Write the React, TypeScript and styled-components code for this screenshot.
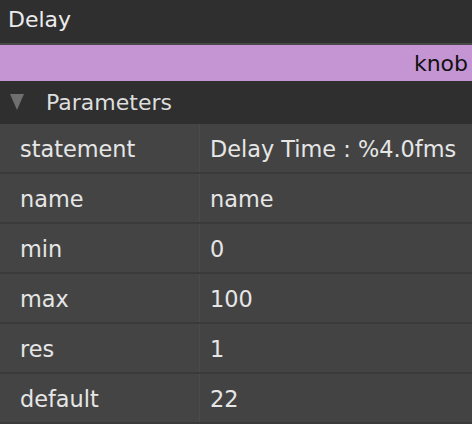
import styled, { createGlobalStyle } from "styled-components";

const GlobalStyle = createGlobalStyle`
  html, body {
    margin: 0;
    padding: 0;
    background: #2f2f2f;
  }
  body {
    font-family: "DejaVu Sans", "Liberation Sans", sans-serif;
  }
`;

const Panel = styled.div`
  width: 472px;
  height: 424px;
  overflow: hidden;
  background: #2f2f2f;
  color: #e4e4e4;
  font-size: 22px;
`;

const TitleBar = styled.div`
  height: 45px;
  display: flex;
  align-items: center;
  padding: 0 0 4px 8px;
  box-sizing: border-box;
  border-bottom: 2px solid #4a4a4a;
  color: #ececec;
`;

const TypeBar = styled.div`
  height: 36px;
  display: flex;
  align-items: center;
  justify-content: flex-end;
  padding: 0 4px 0 0;
  background: #c594d3;
  color: #111;
`;

const SectionHeader = styled.div`
  height: 43px;
  display: flex;
  align-items: center;
  gap: 22px;
  padding: 0 0 1px 10px;
  box-sizing: border-box;
  color: #dedede;
`;

const Rows = styled.div`
  display: flex;
  flex-direction: column;
`;

const Row = styled.div`
  display: grid;
  grid-template-columns: 199px 1px 1fr;
  height: 48px;
  border-bottom: 2px solid #3a3a3a;
  background: #444444;
`;

const Cell = styled.div<{ $value?: boolean }>`
  display: flex;
  align-items: center;
  padding: 2px 0 0 ${(p) => (p.$value ? "10px" : "20px")};
  background: ${(p) => (p.$value ? "#434343" : "#444444")};
  color: #e6e6e6;
  white-space: nowrap;
  font-size: 22.4px;
`;

const Divider = styled.div`
  background: #4b4b4b;
`;

const params: [string, string][] = [
  ["statement", "Delay Time : %4.0fms"],
  ["name", "name"],
  ["min", "0"],
  ["max", "100"],
  ["res", "1"],
  ["default", "22"],
];

function Caret() {
  return (
    <svg width="14" height="16" viewBox="0 0 14 16">
      <polygon points="0,0 14,0 7,16" fill="#6f6f6f" />
    </svg>
  );
}

export default function App() {
  return (
    <>
      <GlobalStyle />
      <Panel>
        <TitleBar>Delay</TitleBar>
        <TypeBar>knob</TypeBar>
        <SectionHeader>
          <Caret />
          Parameters
        </SectionHeader>
        <Rows>
          {params.map(([key, value]) => (
            <Row key={key}>
              <Cell>{key}</Cell>
              <Divider />
              <Cell $value>{value}</Cell>
            </Row>
          ))}
        </Rows>
      </Panel>
    </>
  );
}
